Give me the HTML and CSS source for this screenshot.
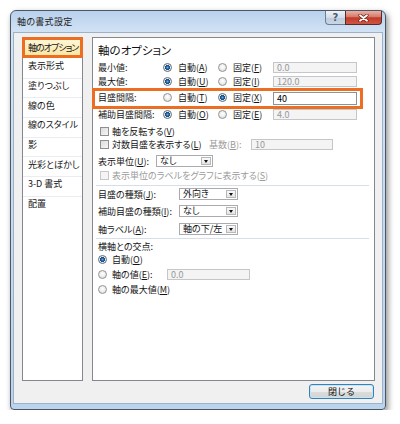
FILE: index.html
```html
<!DOCTYPE html>
<html lang="ja">
<head>
<meta charset="utf-8">
<title>軸の書式設定</title>
<link rel="stylesheet" href="styles.css">
</head>
<body>
<div class="window">
  <div class="titlebar">
    <span class="title">軸の書式設定</span>
    <div class="caption-btns">
      <span class="cbtn help">?</span>
      <span class="cbtn close">
        <svg width="11" height="8" viewBox="0 0 11 8">
          <path d="M2 1.2 L9 6.8 M9 1.2 L2 6.8" stroke="#6a1d14" stroke-width="3.2" stroke-linecap="round"/>
          <path d="M2 1.2 L9 6.8 M9 1.2 L2 6.8" stroke="#ffffff" stroke-width="1.8" stroke-linecap="round"/>
        </svg>
      </span>
    </div>
  </div>
  <div class="client">
    <div class="main">
      <ul class="nav">
        <li class="sel">軸のオプション</li>
        <li>表示形式</li>
        <li>塗りつぶし</li>
        <li>線の色</li>
        <li>線のスタイル</li>
        <li>影</li>
        <li>光彩とぼかし</li>
        <li>3-D 書式</li>
        <li>配置</li>
      </ul>
      <div class="panel">
        <div class="heading">軸のオプション</div>
        <div class="opts r1">
          <span class="lbl">最小値:</span>
          <span class="opt"><span class="radio on"></span><span>自動(<u>A</u>)</span></span>
          <span class="opt"><span class="radio"></span><span>固定(<u>F</u>)</span></span>
          <span class="input dis">0.0</span>
        </div>
        <div class="opts r2">
          <span class="lbl">最大値:</span>
          <span class="opt"><span class="radio on"></span><span>自動(<u>U</u>)</span></span>
          <span class="opt"><span class="radio"></span><span>固定(<u>I</u>)</span></span>
          <span class="input dis">120.0</span>
        </div>
        <div class="opts r3">
          <span class="lbl">目盛間隔:</span>
          <span class="opt"><span class="radio"></span><span>自動(<u>T</u>)</span></span>
          <span class="opt"><span class="radio on"></span><span>固定(<u>X</u>)</span></span>
          <span class="input big">40</span>
        </div>
        <div class="opts r4">
          <span class="lbl">補助目盛間隔:</span>
          <span class="opt"><span class="radio on"></span><span>自動(<u>O</u>)</span></span>
          <span class="opt"><span class="radio"></span><span>固定(<u>E</u>)</span></span>
          <span class="input dis">4.0</span>
        </div>

        <div class="row cb-row first">
          <span class="check"></span><span>軸を反転する(<u>V</u>)</span>
        </div>
        <div class="row cb-row">
          <span class="check"></span><span class="cb-wide">対数目盛を表示する(<u>L</u>)</span>
          <span class="base-lbl dim">基数(<u>B</u>):</span>
          <span class="input dis base">10</span>
        </div>
        <div class="row unit-row">
          <span class="unit-lbl">表示単位(<u>U</u>):</span>
          <span class="select unit"><span class="val">なし</span><span class="dd"></span></span>
        </div>
        <div class="row cb-row">
          <span class="check dis"></span><span class="dim">表示単位のラベルをグラフに表示する(<u>S</u>)</span>
        </div>

        <div class="sep s1"></div>

        <div class="row sel-row t1">
          <span class="sel-lbl">目盛の種類(<u>J</u>):</span>
          <span class="select wide"><span class="val">外向き</span><span class="dd"></span></span>
        </div>
        <div class="row sel-row t2">
          <span class="sel-lbl">補助目盛の種類(<u>I</u>):</span>
          <span class="select wide"><span class="val">なし</span><span class="dd"></span></span>
        </div>
        <div class="row sel-row t3">
          <span class="sel-lbl">軸ラベル(<u>A</u>):</span>
          <span class="select wide"><span class="val">軸の下/左</span><span class="dd"></span></span>
        </div>

        <div class="sep s2"></div>

        <div class="row cross-lbl">横軸との交点:</div>
        <div class="row rrow">
          <span class="radio on"></span><span>自動(<u>O</u>)</span>
        </div>
        <div class="row rrow">
          <span class="radio"></span><span class="rr-wide">軸の値(<u>E</u>):</span>
          <span class="input dis axisval">0.0</span>
        </div>
        <div class="row rrow">
          <span class="radio"></span><span>軸の最大値(<u>M</u>)</span>
        </div>

        <div class="callout"></div>
      </div>
    </div>
    <div class="footer">
      <button class="btn" type="button">閉じる</button>
    </div>
  </div>
</div>
</body>
</html>
```

FILE: styles.css
```css
html, body {
  margin: 0;
  padding: 0;
  background: #ffffff;
}

body {
  font-family: "Noto Sans CJK JP", "Noto Sans", sans-serif;
  font-size: 9px;
  font-feature-settings: "palt";
  color: #151515;
}

u {
  text-decoration: underline;
  text-underline-offset: 1px;
}

.window {
  margin: 10px 0 0 10px;
  width: 376px;
  height: 400px;
  box-sizing: border-box;
  border: 1px solid #4b5665;
  border-radius: 6px 6px 4px 4px;
  background: linear-gradient(#b9d1ec, #d2e3f5 22px, #c4d9ef 60%, #bcd3ed);
  padding: 0 2px 5px 2px;
  display: flex;
  flex-direction: column;
  box-shadow: 2px 3px 6px rgba(0, 0, 0, 0.45);
}

.titlebar {
  height: 21px;
  flex: none;
  display: flex;
  align-items: center;
  padding-left: 4px;
}

.title {
  font-size: 9px;
  color: #1b1b1b;
  line-height: 12px;
  letter-spacing: 0.3px;
}

.caption-btns {
  margin-left: auto;
  margin-right: 1px;
  align-self: flex-start;
  display: flex;
}

.cbtn {
  height: 14px;
  box-sizing: border-box;
  display: flex;
  align-items: center;
  justify-content: center;
}

.help {
  width: 20px;
  border: 1px solid #6f7f92;
  border-top: none;
  border-right: none;
  border-radius: 0 0 0 4px;
  background: linear-gradient(#eef3f8, #d3dde9 50%, #bccbdc 51%, #c9d6e4);
  color: #4e5b6a;
  font-family: "DejaVu Sans", sans-serif;
  font-weight: bold;
  font-size: 10px;
  line-height: 12px;
}

.close {
  width: 37px;
  border: 1px solid #5a2a24;
  border-top: none;
  border-radius: 0 0 4px 0;
  background: linear-gradient(#eab2a6, #d57a69 45%, #c13a2c 52%, #cf5643);
}

.client {
  flex: 1;
  border: 1px solid #9db2c9;
  background: #f0f0f0;
  padding: 4px 7px 4px 8px;
  display: flex;
  flex-direction: column;
}

.main {
  display: flex;
  gap: 9px;
  height: 344px;
  flex: none;
}

/* left category list */
.nav {
  width: 61px;
  flex: none;
  box-sizing: border-box;
  border: 1px solid #828790;
  background: #ffffff;
  margin: 0;
  padding: 0;
  list-style: none;
}

.nav li {
  height: 19.7px;
  box-sizing: border-box;
  padding: 0 0 5px 5px;
  display: flex;
  align-items: center;
  border-top: 1px solid #e9ecf0;
  white-space: nowrap;
  line-height: 11px;
}

.nav li.sel {
  margin: -1px -1px 0 -1px;
  height: 21px;
  border: 3px solid #ec6e23;
  background: linear-gradient(#fef6d6, #fbe6a4);
  padding: 0 0 1px 3px;
  letter-spacing: -1px;
}

.nav li.sel + li {
  border-top: none;
}

/* right options panel */
.panel {
  flex: 1;
  position: relative;
  box-sizing: border-box;
  border: 1px solid #828790;
  background: #ffffff;
  padding: 5px 0 0 5px;
  display: flex;
  flex-direction: column;
}

.heading {
  font-size: 11.5px;
  line-height: 14px;
  height: 14px;
  color: #111;
}

.opts {
  display: grid;
  grid-template-columns: 65px 55px 55px 84px;
  align-items: center;
  line-height: 11px;
}

.r1 { height: 14px; margin-top: 3px; }
.r2 { height: 14px; }
.r3 { height: 18px; }
.r4 { height: 16px; }

.lbl {
  white-space: nowrap;
}

.opt {
  display: flex;
  align-items: center;
  gap: 6px;
  white-space: nowrap;
}

.radio {
  width: 9px;
  height: 9px;
  flex: none;
  box-sizing: border-box;
  border-radius: 50%;
  border: 1px solid #939393;
  background: radial-gradient(circle at 50% 40%, #ffffff 0, #f1f1f1 40%, #d6d6d6 100%);
}

.radio.on {
  border-color: #5a6d80;
  background: radial-gradient(circle at 50% 50%, #5fb0ec 0, #1f5c9c 1.6px, #234a75 2.3px, #eef2f5 2.8px, #d8dde2 100%);
}

.input {
  height: 11px;
  box-sizing: border-box;
  border: 1px solid #c3c7cc;
  background: #f4f4f4;
  color: #999999;
  padding-left: 3px;
  line-height: 9px;
  font-size: 9px;
  display: flex;
  align-items: center;
  white-space: nowrap;
}

.input.big {
  height: 13px;
  border-color: #8e9297;
  background: #ffffff;
  color: #000;
  margin-top: 3px;
}

.row {
  display: flex;
  align-items: center;
  line-height: 11px;
  white-space: nowrap;
}

.cb-row {
  height: 13px;
  padding-left: 2px;
}

.cb-row.first {
  height: 14px;
  margin-top: 2px;
}

.check {
  width: 9px;
  height: 9px;
  flex: none;
  box-sizing: border-box;
  border: 1px solid #8f8f8f;
  background: linear-gradient(135deg, #dcdcdc, #f6f6f6);
  margin-right: 3px;
}

.check.dis {
  border-color: #c8c8c8;
  background: #f4f4f4;
}

.dim {
  color: #9b9b9b;
}

.cb-wide {
  width: 97px;
}

.base-lbl {
  width: 42px;
}

.input.base {
  width: 82px;
}

.unit-row {
  height: 16px;
  margin-top: 2px;
}

.unit-lbl {
  width: 58px;
}

.select {
  height: 12px;
  box-sizing: border-box;
  border: 1px solid #a9abb0;
  background: #ffffff;
  display: flex;
  align-items: center;
  padding-left: 3px;
  padding-right: 1px;
  color: #111;
}

.select.unit {
  width: 57px;
}

.select.wide {
  width: 59px;
}

.select .val {
  flex: 1;
  line-height: 10px;
}

.dd {
  width: 10px;
  height: 8px;
  box-sizing: border-box;
  border: 1px solid #b8b8b8;
  background: linear-gradient(#fafafa, #e4e4e4);
  display: flex;
  align-items: center;
  justify-content: center;
}

.dd::after {
  content: "";
  width: 0;
  height: 0;
  border-left: 2.5px solid transparent;
  border-right: 2.5px solid transparent;
  border-top: 3px solid #111;
}

.sep {
  height: 1px;
  background: #d6dee7;
  margin-right: 5px;
  margin-left: -2px;
}

.s1 {
  margin-top: 3px;
}

.sel-row {
  height: 14px;
}

.t1 { margin-top: 1px; }
.t2 { margin-top: 3px; }
.t3 { margin-top: 4px; }

.sel-lbl {
  width: 81px;
}

.s2 {
  margin-top: 2px;
}

.cross-lbl {
  height: 12px;
  margin-top: 1px;
}

.rrow {
  height: 14px;
  gap: 5px;
}

.rrow + .rrow {
  margin-top: 1px;
}

.rr-wide {
  width: 50px;
}

.input.axisval {
  width: 83px;
}

/* annotation frame over the tick-interval row */
.callout {
  position: absolute;
  left: -1px;
  top: 50px;
  width: 271px;
  height: 21px;
  box-sizing: border-box;
  border: 3px solid #ec6e23;
  pointer-events: none;
}

/* footer */
.footer {
  display: flex;
  justify-content: flex-end;
  margin-top: 3px;
  padding-right: 1px;
}

.btn {
  width: 65px;
  height: 15px;
  box-sizing: border-box;
  padding: 0;
  margin: 0;
  border: 1px solid #3c7fb1;
  border-radius: 3px;
  background: linear-gradient(#f4f4f4, #ececec 50%, #dcdcdc 51%, #d3d3d3);
  box-shadow: inset 0 0 0 1px #bfe6fa;
  font-family: "Noto Sans CJK JP", "Noto Sans", sans-serif;
  font-size: 9px;
  line-height: 11px;
  color: #111;
}
```
